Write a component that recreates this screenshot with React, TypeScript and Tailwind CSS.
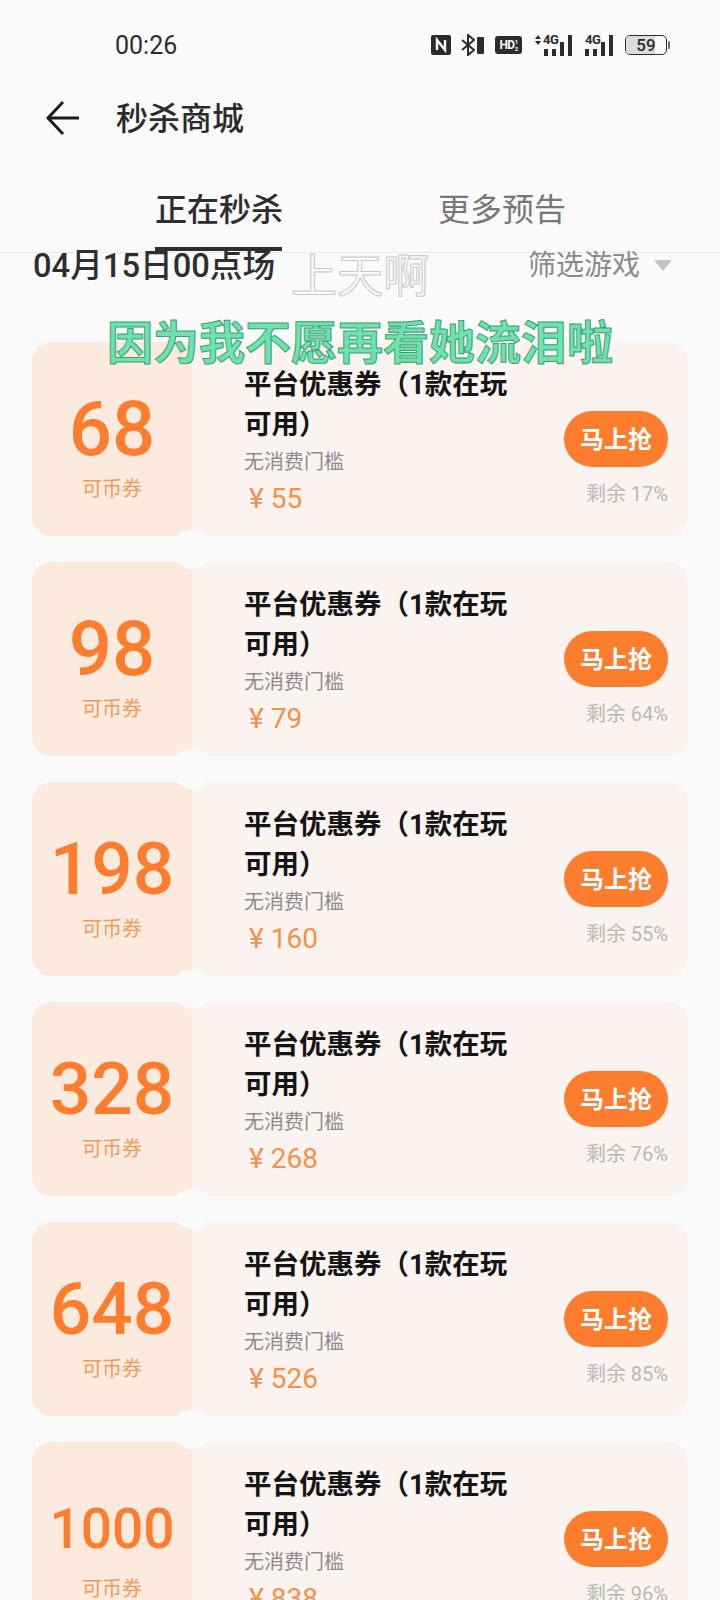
const coupons = [
  { value: '68', price: '55', left: '17%' },
  { value: '98', price: '79', left: '64%' },
  { value: '198', price: '160', left: '55%' },
  { value: '328', price: '268', left: '76%' },
  { value: '648', price: '526', left: '85%' },
  { value: '1000', price: '838', left: '96%' },
];

function Signal({ arrows }: { arrows?: boolean }) {
  return (
    <div className="relative flex h-[21px] items-end">
      {arrows && (
        <svg width="8" height="10" viewBox="0 0 8 10" className="mr-[2px] self-start">
          <path d="M4 0l3 4H1zM4 10L1 6h6z" fill="#2c2c2c" />
        </svg>
      )}
      <div className="flex items-end gap-[4px]">
        <div className="h-[7px] w-[4px] bg-[#2c2c2c]" />
        <div className="h-[7px] w-[4px] bg-[#2c2c2c]" />
        <div className="h-[14px] w-[4px] bg-[#2c2c2c]" />
        <div className="h-[21px] w-[4px] bg-[#2c2c2c]" />
      </div>
      <span className={`absolute top-[-2px] text-[13px] font-bold leading-[13px] tracking-[-0.5px] text-[#2c2c2c] ${arrows ? 'left-[9px]' : 'left-0'}`}>4G</span>
    </div>
  );
}

function StatusBar() {
  return (
    <div className="flex h-[90px] items-center pl-[115px] pr-[50px] text-[#2c2c2c]">
      <span className="text-[25px] leading-none">00:26</span>
      <div className="ml-auto flex items-center">
        <svg width="20" height="20" viewBox="0 0 20 20">
          <rect width="20" height="20" rx="2" fill="#2c2c2c" />
          <path d="M6 15V5l8 10V5" stroke="#fafafa" strokeWidth="2.4" fill="none" />
        </svg>
        <svg width="14" height="22" viewBox="0 0 14 22" className="ml-[10px]">
          <path d="M1 6l12 10-6 5V1l6 5L1 16" stroke="#2c2c2c" strokeWidth="2" fill="none" />
        </svg>
        <div className="ml-[2px] h-[17px] w-[7px] rounded-[1px] bg-[#2c2c2c]" />
        <div className="ml-[11px] flex h-[18px] w-[27px] items-center justify-center rounded-[3px] bg-[#2c2c2c] text-[12px] font-bold leading-none tracking-[-0.5px] text-[#fafafa]">
          HD<span className="text-[6px] leading-[7px]">1<br />2</span>
        </div>
        <div className="ml-[12px]">
          <Signal arrows />
        </div>
        <div className="ml-[13px]">
          <Signal />
        </div>
        <div className="relative ml-[12px] flex h-[20px] w-[42px] items-center justify-center overflow-hidden rounded-[5px] border border-[#2c2c2c]">
          <div className="absolute inset-y-0 left-0 w-[72%] bg-[#dcdcdc]" />
          <span className="relative text-[17px] font-medium leading-none">59</span>
        </div>
        <div className="ml-[1px] h-[8px] w-[2px] rounded-r-[1px] bg-[#777]" />
      </div>
    </div>
  );
}

function Tabs() {
  return (
    <div className="flex h-[63px] items-start border-b border-[#e8e8e8] pl-[155px]">
      <div className="relative h-[62px] w-[127px] whitespace-nowrap pt-[2px] text-[32px] font-medium leading-[36px] text-[#2e2e2e]">
        正在秒杀
        <div className="absolute bottom-[1px] left-0 right-0 h-[4px] bg-[#2e2e2e]" />
      </div>
      <div className="ml-[156px] pt-[2px] text-[32px] leading-[36px] text-[#777]">更多预告</div>
    </div>
  );
}

function Coupon({ value, price, left }: { value: string; price: string; left: string }) {
  const numberSize = value.length > 3 ? 'text-[55px]' : value.length > 2 ? 'text-[73px]' : 'text-[76px]';
  return (
    <div className="relative flex h-[194px] overflow-hidden rounded-[20px] bg-[#fbf3ef]">
      <div className="flex w-[160px] shrink-0 flex-col items-center bg-[#fbeadd] pt-[47px]">
        <span className={`h-[80px] font-medium leading-[80px] text-[#fd7d2e] ${numberSize}`}>{value}</span>
        <span className="mt-[6px] text-[20px] leading-[28px] text-[#f29a5a]">可币券</span>
      </div>
      <div className="flex min-w-0 flex-1 pl-[52px] pr-[20px]">
        <div className="w-[270px] pt-[23px]">
          <div className="text-[27.5px] font-bold leading-[40px] text-[#141414]">平台优惠券（1款在玩可用）</div>
          <div className="mt-[3px] text-[20px] leading-[28px] text-[#8c8c8c]">无消费门槛</div>
          <div className="mt-[4px] pl-[5px] text-[28px] leading-[38px] text-[#f59048]">¥ {price}</div>
        </div>
        <div className="ml-auto flex flex-col items-end pt-[69px]">
          <div className="flex h-[56px] w-[104px] items-center justify-center rounded-full bg-[#fd7d2e] pt-[1px] text-[24px] font-bold text-white">马上抢</div>
          <div className="mt-[13px] text-[20px] leading-[28px] text-[#b9b9b9]">剩余 {left}</div>
        </div>
      </div>
    </div>
  );
}

export default function App() {
  return (
    <div className="relative h-[1600px] w-[720px] overflow-hidden bg-[#fafafa] font-['Roboto','Noto_Sans_CJK_SC',sans-serif]">
      <StatusBar />
      <div className="flex h-[100px] items-start pl-[46px] pt-[10px]">
        <svg width="34" height="36" viewBox="0 0 34 36" className="text-[#1c1c1c]">
          <path d="M17 2L2 18l15 16M2 18h31" stroke="currentColor" strokeWidth="3" fill="none" />
        </svg>
        <span className="ml-[36px] mt-[-3px] text-[32px] font-medium leading-[44px] text-[#2a2a2a]">秒杀商城</span>
      </div>
      <Tabs />
      <div className="flex h-[26px] items-center pl-[33px] pr-[48px]">
        <span className="text-[32.7px] font-medium leading-none text-[#2e2e2e]">04月15日00点场</span>
        <span className="ml-auto text-[28px] leading-none text-[#8a8a8a]">筛选游戏</span>
        <div className="mb-[2px] ml-[14px] h-0 w-0 border-x-[9px] border-t-[11px] border-x-transparent border-t-[#c4c4c4]" />
      </div>

      <div className="mt-[63px] flex flex-col gap-[26px] px-[32px]">
        {coupons.map((c) => (
          <Coupon key={c.value} {...c} />
        ))}
      </div>

      {/* notches between the cards */}
      {coupons.map((c, i) => (
        <div key={c.value} className="absolute left-[172px] h-[40px] w-[40px] rounded-full bg-[#fafafa]" style={{ top: 529 + i * 220 }} />
      ))}

      {/* video captions over the page */}
      <div className="absolute left-0 right-0 top-[248px] text-center text-[46px] leading-[56px] text-[#fafafa] [-webkit-text-stroke:1px_#c8c8c8]">上天啊</div>
      <div className="absolute left-0 right-0 top-[313px] text-center text-[46px] font-bold leading-[60px] text-[#6de3ab] [-webkit-text-stroke:1px_#3d9f78]">因为我不愿再看她流泪啦</div>
    </div>
  );
}
